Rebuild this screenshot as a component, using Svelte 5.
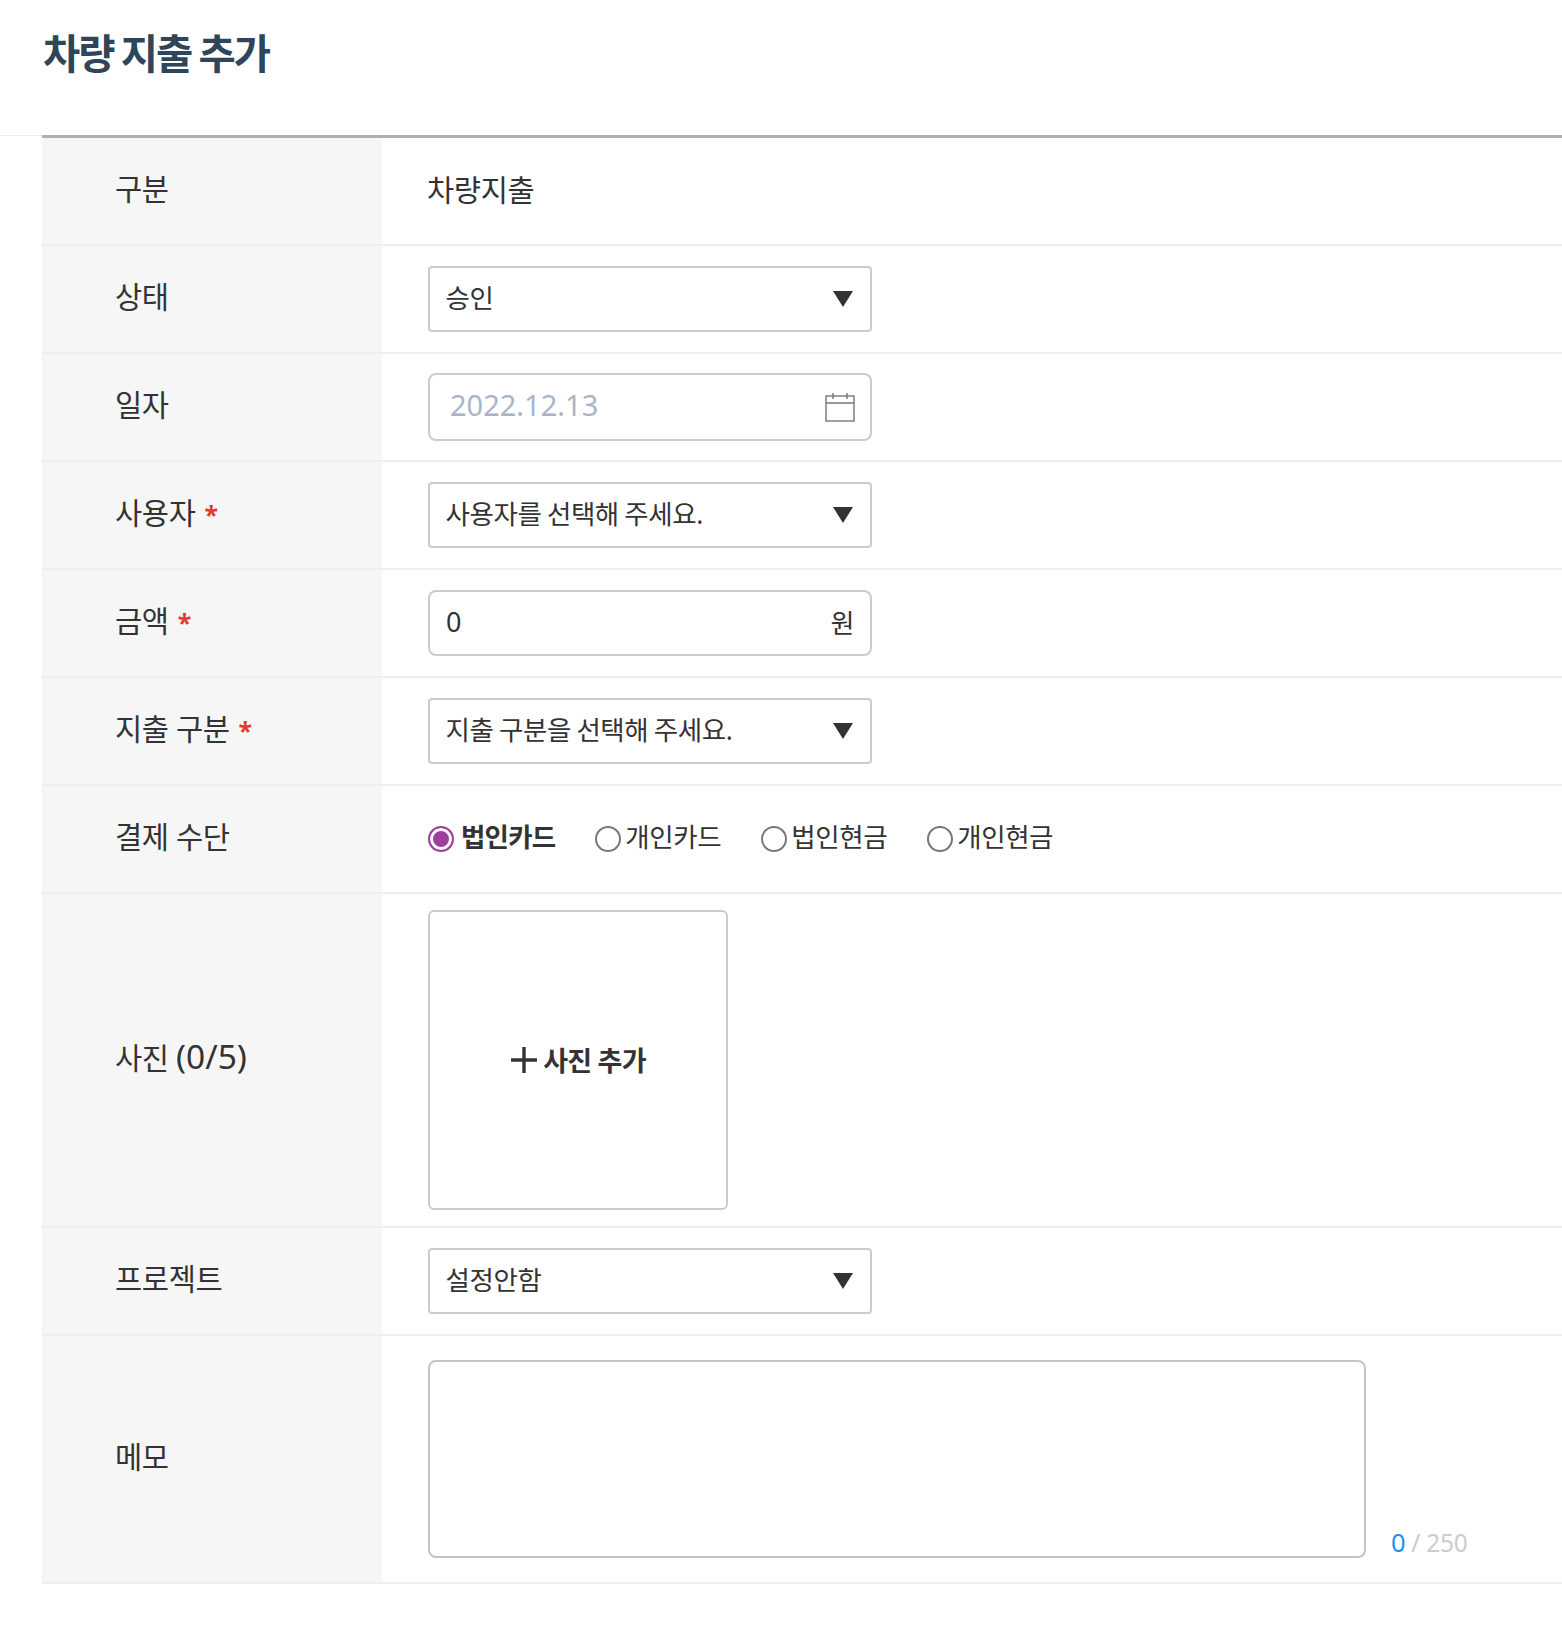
<script>
  const methods = ['법인카드', '개인카드', '법인현금', '개인현금']
  let method = $state('법인카드')
</script>

<div class="page">
  <header><h1>차량 지출 추가</h1></header>

  <div class="form">
    <div class="row">
      <div class="label">구분</div>
      <div class="cell plain">차량지출</div>
    </div>

    <div class="row">
      <div class="label">상태</div>
      <div class="cell">
        <div class="select">승인 {@render caret()}</div>
      </div>
    </div>

    <div class="row">
      <div class="label">일자</div>
      <div class="cell">
        <div class="input date">
          <span>2022.12.13</span>
          <svg width="30" height="30" viewBox="0 0 30 30" fill="none" stroke="#777" stroke-width="1.4">
            <rect x="1" y="4" width="28" height="25" />
            <path d="M1 11H29M8 1V7M22 1V7" />
          </svg>
        </div>
      </div>
    </div>

    <div class="row">
      <div class="label">사용자 <i>*</i></div>
      <div class="cell">
        <div class="select">사용자를 선택해 주세요. {@render caret()}</div>
      </div>
    </div>

    <div class="row">
      <div class="label">금액 <i>*</i></div>
      <div class="cell">
        <div class="input amount">
          <span>0</span>
          <span class="unit">원</span>
        </div>
      </div>
    </div>

    <div class="row">
      <div class="label">지출 구분 <i>*</i></div>
      <div class="cell">
        <div class="select">지출 구분을 선택해 주세요. {@render caret()}</div>
      </div>
    </div>

    <div class="row">
      <div class="label">결제 수단</div>
      <div class="cell radios">
        {#each methods as m}
          <button class="radio" class:on={method === m} onclick={() => (method = m)}>
            <span class="dot"></span>{m}
          </button>
        {/each}
      </div>
    </div>

    <div class="row photo-row">
      <div class="label"><span>사진 <span class="num">(0/5)</span></span></div>
      <div class="cell">
        <div class="photo">
          <svg width="28" height="28" viewBox="0 0 28 28" stroke="#333" stroke-width="3.4">
            <path d="M1 14H27M14 1V27" />
          </svg>
          <span>사진 추가</span>
        </div>
      </div>
    </div>

    <div class="row">
      <div class="label">프로젝트</div>
      <div class="cell">
        <div class="select">설정안함 {@render caret()}</div>
      </div>
    </div>

    <div class="row memo-row">
      <div class="label">메모</div>
      <div class="cell memo">
        <textarea aria-label="메모"></textarea>
        <div class="count"><b>0</b> / 250</div>
      </div>
    </div>
  </div>
</div>

{#snippet caret()}
  <svg class="caret" width="20" height="16" viewBox="0 0 20 16"><path d="M0 0H20L10 16Z" fill="#333" /></svg>
{/snippet}

<style>
  :global(body) {
    background: #fff;
  }

  .page {
    height: 1632px;
    color: #333;
    font-family: "Noto Sans", "Noto Sans CJK KR", sans-serif;
    font-size: 29.6px;
    letter-spacing: -0.4px;
  }

  header {
    height: 136px;
    padding: 26px 0 0 43px;
    box-sizing: border-box;
    border-bottom: 1px solid #eee;
  }

  h1 {
    margin: 0;
    color: #2f4559;
    font-size: 40.5px;
    font-weight: 700;
    line-height: 56px;
    letter-spacing: -2.1px;
    word-spacing: -1px;
  }

  .form {
    margin: -1px 0 0 42px;
    border-top: 3px solid #b0b0b0;
  }

  .row {
    display: grid;
    grid-template-columns: 340px 1fr;
    height: 108px;
    box-sizing: border-box;
    border-bottom: 2px solid #eee;
  }

  .photo-row {
    height: 334px;
  }

  .memo-row {
    height: 248px;
  }

  .label {
    display: flex;
    align-items: center;
    gap: 9px;
    padding-left: 73px;
    padding-bottom: 8px;
    background: #f6f6f6;
  }

  .label i {
    margin-top: 6px;
    color: #e23b2e;
    font-size: 25px;
    font-style: normal;
    font-weight: 700;
  }

  .num {
    font-size: 33.5px;
    letter-spacing: 0;
  }

  .cell {
    display: flex;
    align-items: center;
    padding-left: 46px;
  }

  .plain {
    padding-left: 45px;
    padding-bottom: 6px;
  }

  .select,
  .input {
    display: flex;
    align-items: center;
    justify-content: space-between;
    width: 444px;
    box-sizing: border-box;
    border: 2px solid #ccc;
    border-radius: 4px;
    background: #fff;
  }

  .select {
    height: 66px;
    padding: 0 17px 6px 15.5px;
    font-size: 26.5px;
    word-spacing: -1px;
  }

  .caret {
    margin-top: 6px;
  }

  .input {
    height: 66px;
    border-radius: 8px;
    padding: 0 16px 4px;
    font-size: 27px;
  }

  .date {
    height: 68px;
    padding: 0 15px 4px 20px;
    color: #a9b4c8;
    font-size: 29px;
    letter-spacing: 0;
  }

  .date span {
    margin-bottom: 2px;
  }

  .date svg {
    margin-top: 4px;
  }

  .unit {
    font-size: 26px;
    margin-top: 2px;
  }

  .radios {
    gap: 40px;
  }

  .radio {
    display: flex;
    align-items: center;
    gap: 4px;
    padding: 0 0 8px;
    border: 0;
    background: none;
    color: inherit;
    font: inherit;
    letter-spacing: inherit;
    font-size: 26.5px;
    cursor: pointer;
  }

  .dot {
    width: 26px;
    height: 26px;
    box-sizing: border-box;
    margin-top: 8px;
    border: 2px solid #777;
    border-radius: 50%;
    background: #fff;
  }

  .radio.on {
    gap: 7px;
    font-weight: 700;
    letter-spacing: -0.8px;
  }

  .radio.on .dot {
    border-color: #9c3f9f;
    background: #9c3f9f;
    box-shadow: inset 0 0 0 3px #fff;
  }

  .photo {
    display: flex;
    align-items: center;
    justify-content: center;
    gap: 5px;
    width: 300px;
    height: 300px;
    box-sizing: border-box;
    border: 2px solid #ccc;
    border-radius: 6px;
    font-size: 27px;
    font-weight: 700;
    letter-spacing: -0.8px;
  }

  .photo span {
    margin-bottom: 2px;
  }

  .memo {
    align-items: flex-end;
    padding-bottom: 24px;
  }

  textarea {
    display: block;
    width: 938px;
    height: 198px;
    box-sizing: border-box;
    border: 2px solid #c4c4c4;
    border-radius: 8px;
    resize: none;
    outline: none;
  }

  .count {
    margin-left: 25px;
    color: #ccc;
    font-size: 24.5px;
    letter-spacing: -0.3px;
    line-height: 30px;
  }

  .count b {
    color: #1a93ef;
    font-size: 25.5px;
    font-weight: 400;
  }
</style>
